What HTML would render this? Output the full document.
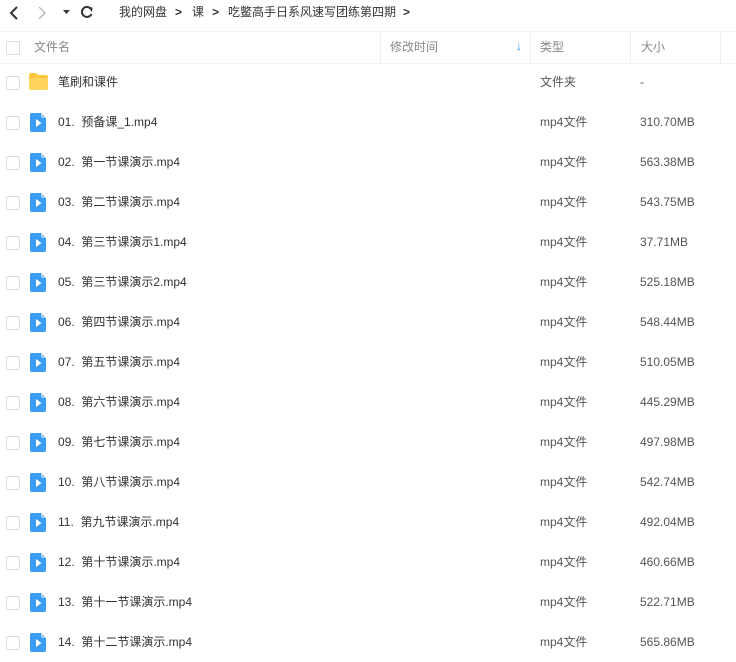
<!DOCTYPE html>
<html><head><meta charset="utf-8"><style>
body{margin:0;width:736px;height:662px;background:#fff;font-family:"Liberation Sans","Noto Sans CJK SC",sans-serif;font-size:12px;color:#333;overflow:hidden;position:relative}
span{line-height:14px;display:block;white-space:nowrap}
.top{position:absolute;top:0;left:0;height:26px;width:736px}
.top span{position:absolute;top:5px;font-size:12px;color:#333}
.hdr{position:absolute;top:31px;left:0;width:736px;height:31px;border-top:1px solid #f2f2f2;border-bottom:1px solid #f2f2f2}
.hdr span{position:absolute;top:8px;color:#888;font-size:12px}
.sep{position:absolute;top:0;width:1px;height:31px;background:#eee}
.cb{position:absolute;width:12px;height:12px;border:1px solid #ddd;border-radius:2px;background:#fff}
.row{position:absolute;left:0;width:736px;height:40px}
.row .n{position:absolute;left:58px;top:13px}
.row .t{position:absolute;left:540px;top:13px;color:#555}
.row .s{position:absolute;left:640px;top:13px;color:#555}
.ic{position:absolute;left:30px;top:11px}
</style></head><body>
<div class="top">
<svg style="position:absolute;left:8px;top:5px" width="12" height="16"><path d="M9 2 L3 8 L9 14" stroke="#333" stroke-width="2" fill="none"/></svg>
<svg style="position:absolute;left:36px;top:5px" width="12" height="16"><path d="M3 2 L9 8 L3 14" stroke="#bbb" stroke-width="1.5" fill="none"/></svg>
<svg style="position:absolute;left:63px;top:10px" width="7" height="5"><path d="M0 0 L7 0 L3.5 4 Z" fill="#333"/></svg>
<svg style="position:absolute;left:80px;top:5px" width="14" height="14"><path d="M11 4 A5 5 0 1 0 11.5 9" stroke="#333" stroke-width="2" fill="none"/><path d="M8 2 L12.5 2.5 L12 7 Z" fill="#333"/></svg>
<span style="left:119px">我的网盘</span><span style="left:175px;font-weight:bold">&gt;</span>
<span style="left:192px">课</span><span style="left:212px;font-weight:bold">&gt;</span>
<span style="left:228px">吃鳖高手日系风速写团练第四期</span><span style="left:403px;font-weight:bold">&gt;</span>
</div>
<div class="hdr">
<div class="cb" style="left:6px;top:9px"></div>
<span style="left:34px">文件名</span>
<div class="sep" style="left:380px"></div><span style="left:390px">修改时间</span>
<span style="left:516px;color:#2d8cf0;font-weight:bold;top:7px">↓</span>
<div class="sep" style="left:530px"></div><span style="left:540px">类型</span>
<div class="sep" style="left:630px"></div><span style="left:641px">大小</span>
<div class="sep" style="left:720px"></div>
</div>
<div class="row" style="top:62px"><div class="cb" style="left:6px;top:14px"></div>
<svg class="ic" style="left:28px;top:10px" width="21" height="19"><path d="M1 3 Q1 1 3 1 L8 1 L10 3 L18 3 Q20 3 20 5 L20 16 Q20 18 18 18 L3 18 Q1 18 1 16 Z" fill="#ffc83d"/><path d="M1 6 L20 6 L20 16 Q20 18 18 18 L3 18 Q1 18 1 16 Z" fill="#ffd45c"/></svg>
<span class="n">笔刷和课件</span><span class="t">文件夹</span><span class="s">-</span></div>
<div id="rows"></div>
<script>
var d=[["01.&nbsp; 预备课_1.mp4","310.70MB"],["02.&nbsp; 第一节课演示.mp4","563.38MB"],["03.&nbsp; 第二节课演示.mp4","543.75MB"],["04.&nbsp; 第三节课演示1.mp4","37.71MB"],["05.&nbsp; 第三节课演示2.mp4","525.18MB"],["06.&nbsp; 第四节课演示.mp4","548.44MB"],["07.&nbsp; 第五节课演示.mp4","510.05MB"],["08.&nbsp; 第六节课演示.mp4","445.29MB"],["09.&nbsp; 第七节课演示.mp4","497.98MB"],["10.&nbsp; 第八节课演示.mp4","542.74MB"],["11.&nbsp; 第九节课演示.mp4","492.04MB"],["12.&nbsp; 第十节课演示.mp4","460.66MB"],["13.&nbsp; 第十一节课演示.mp4","522.71MB"],["14.&nbsp; 第十二节课演示.mp4","565.86MB"]];
var h="";d.forEach(function(r,i){h+='<div class="row" style="top:'+(102+i*40)+'px"><div class="cb" style="left:6px;top:14px"></div><svg class="ic" width="16" height="19"><path d="M2 0 L11 0 L16 5 L16 17 Q16 19 14 19 L2 19 Q0 19 0 17 L0 2 Q0 0 2 0Z" fill="#3a9cf5"/><path d="M11 0 L16 5 L12 5 Q11 5 11 4Z" fill="#9fd0fb"/><path d="M6 6 L11.5 10 L6 14Z" fill="#fff"/></svg><span class="n">'+r[0]+'</span><span class="t">mp4文件</span><span class="s">'+r[1]+'</span></div>'});
document.getElementById("rows").innerHTML=h;
</script>
</body></html>
